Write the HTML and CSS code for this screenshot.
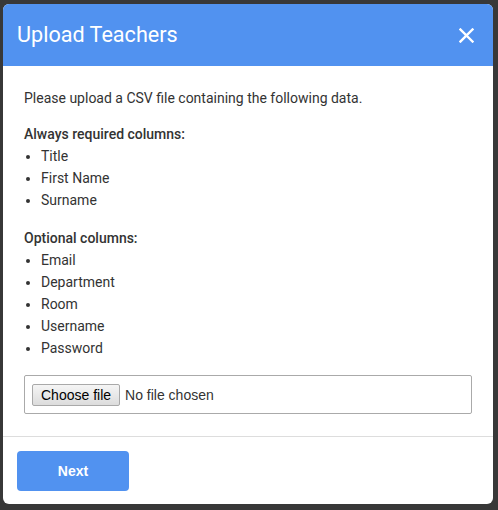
FILE: index.html
```html
<!DOCTYPE html>
<html lang="en">
<head>
<meta charset="utf-8">
<title>Upload Teachers</title>
<link rel="stylesheet" href="styles.css">
</head>
<body>
<div class="modal">
  <div class="modal-header">
    <h1 class="modal-title">Upload Teachers</h1>
    <button class="close" type="button" aria-label="Close">
      <svg width="15" height="15" viewBox="0 0 15 15"><path d="M1.5 1.5 L13.5 13.5 M13.5 1.5 L1.5 13.5" stroke="#fff" stroke-width="2.4" stroke-linecap="square" fill="none"/></svg>
    </button>
  </div>
  <div class="modal-body">
    <p class="intro">Please upload a CSV file containing the following data.</p>
    <p class="label">Always required columns:</p>
    <ul class="cols">
      <li>Title</li>
      <li>First Name</li>
      <li>Surname</li>
    </ul>
    <p class="label">Optional columns:</p>
    <ul class="cols">
      <li>Email</li>
      <li>Department</li>
      <li>Room</li>
      <li>Username</li>
      <li>Password</li>
    </ul>
    <label class="file-box">
      <input class="file-input" type="file" accept=".csv">
      <span class="file-btn">Choose file</span>
      <span class="file-name">No file chosen</span>
    </label>
  </div>
  <div class="modal-footer">
    <button class="btn-next" type="button">Next</button>
  </div>
</div>
</body>
</html>
```

FILE: styles.css
```css
html, body {
  margin: 0;
  padding: 0;
}
body {
  background: #383838;
  width: 498px;
  height: 510px;
  overflow: hidden;
  font-family: Roboto, "Noto Sans", sans-serif;
}
.modal {
  margin: 4px 0 0 3px;
  width: 490px;
  background: #fff;
  border-radius: 6px;
  overflow: hidden;
}
.modal-header {
  height: 62px;
  background: #5192f0;
  display: flex;
  align-items: center;
  justify-content: space-between;
  padding: 0 19px 0 14px;
}
.modal-title {
  margin: 0;
  font-size: 21.6px;
  font-weight: 400;
  color: #fff;
  line-height: 30px;
}
.close {
  background: none;
  border: 0;
  padding: 0;
  width: 15px;
  height: 15px;
  display: flex;
  cursor: pointer;
}
.modal-body {
  padding: 21px 21px 22px;
  color: #333;
  font-size: 14px;
  line-height: 22px;
}
.modal-body p {
  margin: 0;
}
.intro {
  margin-bottom: 14px !important;
}
.label {
  font-weight: 500;
}
.cols {
  margin: 0 0 16px;
  padding-left: 17px;
}
.cols li {
  line-height: 22px;
}
.file-box {
  margin-top: 1px;
  border: 1px solid #aaa;
  border-radius: 2px;
  padding: 7px 7px;
  height: 23px;
  display: flex;
  align-items: center;
  font-family: "Liberation Sans", Arial, sans-serif;
  font-size: 14px;
  line-height: 16px;
  cursor: pointer;
}
.file-input {
  position: absolute;
  width: 1px;
  height: 1px;
  opacity: 0;
  overflow: hidden;
}
.file-btn {
  box-sizing: border-box;
  height: 22px;
  display: flex;
  align-items: center;
  padding: 0 8px;
  color: #000;
  background: linear-gradient(#f5f5f5, #dcdcdc);
  border: 1px solid #a9a9a9;
  border-radius: 2px;
  margin-right: 5px;
}
.file-name {
  color: #333;
}
.modal-footer {
  border-top: 1px solid #ddd;
  padding: 14px 14px 13px;
}
.btn-next {
  width: 112px;
  height: 40px;
  background: #5192f0;
  color: #fff;
  border: 0;
  border-radius: 4px;
  font-family: "Liberation Sans", Arial, sans-serif;
  font-weight: 700;
  font-size: 14px;
  cursor: pointer;
}
```
